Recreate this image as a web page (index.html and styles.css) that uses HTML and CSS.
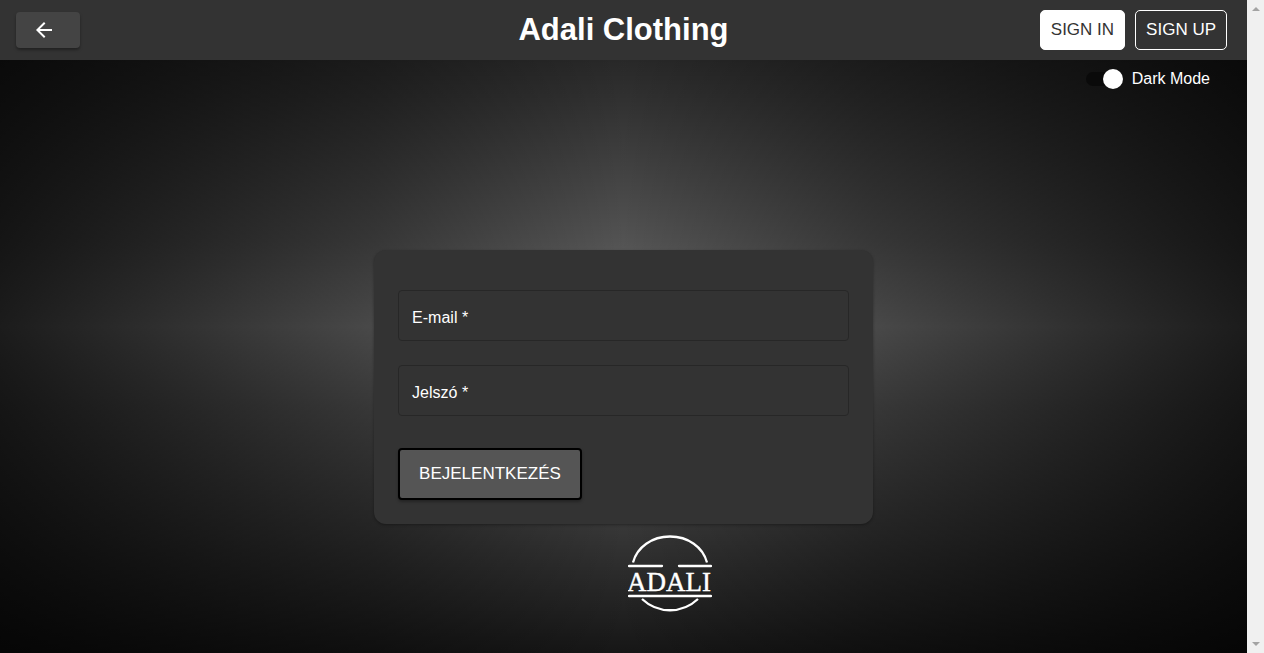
FILE: index.html
```html
<!DOCTYPE html>
<html lang="hu">
<head>
<meta charset="utf-8">
<meta name="viewport" content="width=device-width, initial-scale=1">
<title>Adali Clothing</title>
<link rel="stylesheet" href="styles.css">
</head>
<body>
<div class="page">
  <header class="bar">
    <button class="back" type="button" aria-label="Vissza">
      <svg viewBox="0 0 24 24" width="24" height="24" aria-hidden="true"><path fill="currentColor" d="M20 11H7.83l5.59-5.59L12 4l-8 8 8 8 1.41-1.41L7.83 13H20v-2z"/></svg>
    </button>
    <h1 class="title">Adali Clothing</h1>
    <nav class="auth">
      <a class="auth-link auth-link-active" href="#signin">SIGN IN</a>
      <a class="auth-link" href="#signup">SIGN UP</a>
    </nav>
  </header>
  <label class="mode"><input class="switch" type="checkbox" role="switch" checked>Dark Mode</label>
  <main class="content">
    <form class="card">
      <div class="field">
        <label class="field-label" for="email">E-mail *</label>
        <input class="field-input" id="email" type="email" required>
      </div>
      <div class="field">
        <label class="field-label" for="password">Jelszó *</label>
        <input class="field-input" id="password" type="password" required>
      </div>
      <button class="submit" type="submit">BEJELENTKEZÉS</button>
    </form>
    <svg class="logo" viewBox="0 0 84 77" role="img" aria-label="Adali">
      <g fill="none" stroke="#fff" stroke-width="2.300">
        <path d="M5 27.500C9 12 24 1.500 42 1.500S75 12 79 27.500M14 64C30 79 54 79 70 64"/>
        <path stroke-linecap="round" d="M1 31H34M51 31H83M1 61H83"/>
      </g>
      <text class="logo-text" x="41" y="56" text-anchor="middle">ADALI</text>
    </svg>
  </main>
</div>
<div class="scroll" aria-hidden="true">
  <svg viewBox="0 0 8 4" width="8" height="4"><path fill="#a3a3a3" d="M0 4L4 0l4 4z"/></svg>
  <svg viewBox="0 0 8 4" width="8" height="4"><path fill="#a3a3a3" d="M0 0h8L4 4z"/></svg>
</div>
</body>
</html>
```
FILE: styles.css
```css
* { box-sizing: border-box; }
body {
  margin: 0;
  display: flex;
  min-height: 100vh;
  color: #fff;
  font: 16px/24px "Liberation Sans", Arial, sans-serif;
}
/* Two mirrored fades over a grey base give the star-shaped glow. */
.page {
  flex: 1;
  display: flex;
  flex-direction: column;
  background:
    linear-gradient(to right, rgba(0, 0, 0, .76), rgba(0, 0, 0, .57) 15%, rgba(0, 0, 0, .37) 30%, rgba(0, 0, 0, .2) 40%, rgba(0, 0, 0, .04) 50%, rgba(0, 0, 0, .2) 60%, rgba(0, 0, 0, .37) 70%, rgba(0, 0, 0, .57) 85%, rgba(0, 0, 0, .76)),
    linear-gradient(rgba(0, 0, 0, .73), rgba(0, 0, 0, .64) 9%, rgba(0, 0, 0, .55) 16%, rgba(0, 0, 0, .25) 37%, transparent 50%, rgba(0, 0, 0, .25) 63%, rgba(0, 0, 0, .52) 82%, rgba(0, 0, 0, .8)),
    #737373;
}
.bar {
  display: grid;
  grid-template-columns: 1fr auto 1fr;
  align-items: center;
  height: 60px;
  padding: 0 16px;
  background: #333;
}
.back {
  display: flex;
  align-items: center;
  width: 64px;
  height: 36px;
  padding: 0 16px;
  border: 0;
  border-radius: 4px;
  color: #fff;
  background: #444;
  box-shadow: 0 2px 3px rgba(0, 0, 0, .35);
}
.title { margin: 0; font-size: 31px; line-height: 36px; }
.auth { display: flex; justify-content: flex-end; gap: 10px; padding-right: 4px; }
.auth-link {
  padding: 7px 10px;
  border: 1px solid #fff;
  border-radius: 5px;
  color: #fff;
  font-size: 17px;
  text-decoration: none;
}
.auth-link-active { color: #333; background: #fff; }
.mode {
  display: flex;
  align-items: center;
  align-self: flex-end;
  gap: 9px;
  height: 38px;
  padding-right: 37px;
}
.switch {
  appearance: none;
  display: flex;
  align-items: center;
  justify-content: flex-end;
  width: 37px;
  height: 14px;
  margin: 0;
  border-radius: 7px;
  background: #0a0a0a;
}
.switch::before {
  content: "";
  width: 20px;
  height: 20px;
  flex: none;
  border-radius: 50%;
  background: #fff;
}
.content {
  flex: 1;
  display: flex;
  flex-direction: column;
  align-items: center;
  padding: 152px 0 41px;
}
.card {
  display: flex;
  flex-direction: column;
  align-items: flex-start;
  gap: 24px;
  width: 40%;
  min-width: 320px;
  padding: 40px 24px 24px;
  border-radius: 12px;
  background: #333;
  box-shadow: 0 1px 3px rgba(0, 0, 0, .35);
}
.field { display: grid; align-items: center; width: 100%; }
.field-label, .field-input { grid-area: 1 / 1; }
.field-label { padding: 4px 14px 0; pointer-events: none; }
.field-input {
  width: 100%;
  height: 51px;
  padding: 0 14px;
  border: 1px solid #272727;
  border-radius: 4px;
  color: #fff;
  background: transparent;
  font: inherit;
}
.submit {
  height: 52px;
  margin-top: 8px;
  padding: 0 19px;
  border: 2px solid #000;
  border-radius: 4px;
  color: #fff;
  background: #555;
  font: inherit;
  font-size: 17px;
  box-shadow: 0 2px 3px rgba(0, 0, 0, .3);
}
.logo { width: 84px; height: 77px; margin: 11px 0 0 92px; }
.logo-text {
  fill: #fff;
  stroke: #fff;
  stroke-width: .4px;
  font: 27px "Liberation Serif", serif;
}
.scroll {
  display: flex;
  flex-direction: column;
  align-items: center;
  justify-content: space-between;
  width: 17px;
  padding: 7px 0;
  background: #f0f0f0;
}
```
